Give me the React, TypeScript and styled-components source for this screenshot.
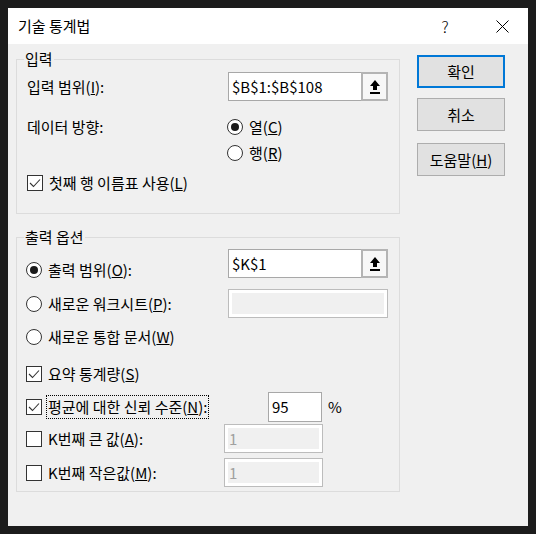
import React from "react";
import styled, { createGlobalStyle } from "styled-components";

const GlobalStyle = createGlobalStyle`
  html, body {
    margin: 0;
    background: #1c1c1c;
  }
  body {
    padding: 8px;
    font-family: "Noto Sans CJK KR", "Noto Sans", sans-serif;
    color: #000;
  }
`;

const Dialog = styled.div`
  width: 520px;
  height: 518px;
  background: #f0f0f0;
  display: flex;
  flex-direction: column;
  overflow: hidden;
`;

const TitleBar = styled.div`
  height: 36px;
  background: #fff;
  display: flex;
  align-items: center;
  padding-left: 10px;
`;

const Title = styled.div`
  flex: 1;
  font-size: 15px;
  line-height: 20px;
`;

const TitleButtons = styled.div`
  display: flex;
  align-items: center;
  gap: 37px;
  padding-right: 16px;
`;

const TitleButton = styled.span`
  width: 20px;
  height: 20px;
  display: flex;
  align-items: center;
  justify-content: center;
  font-size: 16px;
  font-weight: 300;
  line-height: 20px;
`;

const Body = styled.div`
  display: flex;
  gap: 17px;
  padding: 7px 0 0 8px;
`;

const LeftCol = styled.div`
  width: 384px;
  display: flex;
  flex-direction: column;
  gap: 15px;
`;

const ButtonCol = styled.div`
  width: 88px;
  display: flex;
  flex-direction: column;
  padding-top: 4px;
`;

const Group = styled.fieldset`
  margin: 0;
  padding: 0;
  border: 1px solid #dcdcdc;
  min-inline-size: 0;
`;

const GroupTitle = styled.legend`
  margin-left: 7px;
  padding: 0 1px;
  font-size: 15px;
  line-height: 16px;
`;

const GroupBody = styled.div<{ $pt: number; $pb: number; $pl: number }>`
  display: flex;
  flex-direction: column;
  padding: ${({ $pt, $pb, $pl }) => `${$pt}px 0 ${$pb}px ${$pl}px`};
`;

const Row = styled.div<{ $h: number; $mt?: number; $align?: string }>`
  display: flex;
  align-items: ${({ $align }) => $align || "center"};
  height: ${({ $h }) => $h}px;
  margin-top: ${({ $mt }) => $mt || 0}px;
`;

const LabelCell = styled.div<{ $w: number; $drop?: number }>`
  width: ${({ $w }) => $w}px;
  flex-shrink: 0;
  font-size: 15px;
  line-height: 20px;
  margin-bottom: ${({ $drop }) => ($drop ? -$drop : 0)}px;
`;

const TextBox = styled.div<{ $w: number; $h?: number; $disabled?: boolean }>`
  box-sizing: border-box;
  width: ${({ $w }) => $w}px;
  height: ${({ $h }) => $h || 29}px;
  border: 1px solid ${({ $disabled }) => ($disabled ? "#bcbcbc" : "#a8a8a8")};
  background: ${({ $disabled }) => ($disabled ? "#f0f0f0" : "#fff")};
  box-shadow: ${({ $disabled }) => ($disabled ? "inset 0 0 0 3px #fff" : "none")};
  color: ${({ $disabled }) => ($disabled ? "#a0a0a0" : "#000")};
  padding-left: ${({ $disabled }) => ($disabled ? 4 : 3)}px;
  font-size: 15px;
  line-height: ${({ $h }) => ($h || 29) - 2}px;
  white-space: nowrap;
`;

const RefField = styled.div`
  display: flex;
`;

const RefButton = styled.div`
  box-sizing: border-box;
  width: 27px;
  height: 29px;
  margin-left: -1px;
  border: 2px solid #b4b4b4;
  background: #f7f7f7;
  display: flex;
  align-items: center;
  justify-content: center;
`;

const Item = styled.div<{ $gap: number }>`
  display: flex;
  align-items: center;
  gap: ${({ $gap }) => $gap}px;
  font-size: 15px;
  line-height: 20px;
  white-space: nowrap;
`;

const RadioCircle = styled.span<{ $on?: boolean }>`
  box-sizing: border-box;
  width: 16px;
  height: 16px;
  border-radius: 50%;
  border: 1px solid #333;
  background: #fff;
  display: flex;
  align-items: center;
  justify-content: center;
  flex-shrink: 0;

  &::after {
    content: "";
    display: ${({ $on }) => ($on ? "block" : "none")};
    width: 8px;
    height: 8px;
    border-radius: 50%;
    background: #1a1a1a;
  }
`;

const CheckBox = styled.span`
  box-sizing: border-box;
  width: 16px;
  height: 16px;
  border: 1px solid #333;
  background: #fff;
  display: flex;
  align-items: center;
  justify-content: center;
  flex-shrink: 0;
`;

const CheckText = styled.span<{ $focus?: boolean }>`
  border: 1px ${({ $focus }) => ($focus ? "dotted #000" : "solid transparent")};
  padding: 1px 1px;
`;

const Percent = styled.span`
  margin-left: 6px;
  font-size: 15px;
  line-height: 20px;
`;

const DlgButton = styled.div<{ $primary?: boolean; $mt?: number }>`
  box-sizing: border-box;
  width: 88px;
  height: 33px;
  margin-top: ${({ $mt }) => $mt || 0}px;
  background: #e1e1e1;
  border: ${({ $primary }) => ($primary ? "2px solid #0078d7" : "1px solid #adadad")};
  display: flex;
  align-items: center;
  justify-content: center;
  font-size: 15px;
  line-height: 20px;
`;

const CloseIcon = () => (
  <svg width="13" height="13" viewBox="0 0 13 13">
    <path d="M0.5 0.5 L12.5 12.5 M12.5 0.5 L0.5 12.5" stroke="#000" strokeWidth="1" fill="none" />
  </svg>
);

const CollapseIcon = () => (
  <svg width="10" height="14" viewBox="0 0 10 14">
    <path d="M5 0 L10 6 L7 6 L7 10 L3 10 L3 6 L0 6 Z" fill="#000" />
    <rect x="0" y="12" width="10" height="2" fill="#000" />
  </svg>
);

const CheckMark = () => (
  <svg width="12" height="10" viewBox="0 0 12 10">
    <path d="M1 5 L4.5 8.5 L11 1.5" stroke="#333" strokeWidth="1.1" fill="none" />
  </svg>
);

const Radio = ({ on, children }: { on?: boolean; children: React.ReactNode }) => (
  <Item $gap={6}>
    <RadioCircle $on={on} />
    <span>{children}</span>
  </Item>
);

const Check = ({
  on,
  focus,
  children,
}: {
  on?: boolean;
  focus?: boolean;
  children: React.ReactNode;
}) => (
  <Item $gap={4}>
    <CheckBox>{on && <CheckMark />}</CheckBox>
    <CheckText $focus={focus}>{children}</CheckText>
  </Item>
);

const App = () => {
  return (
    <>
      <GlobalStyle />
      <Dialog>
        <TitleBar>
          <Title>기술 통계법</Title>
          <TitleButtons>
            <TitleButton>?</TitleButton>
            <TitleButton>
              <CloseIcon />
            </TitleButton>
          </TitleButtons>
        </TitleBar>
        <Body>
          <LeftCol>
            <Group>
              <GroupTitle>입력</GroupTitle>
              <GroupBody $pt={5} $pb={17} $pl={10}>
                <Row $h={29}>
                  <LabelCell $w={201}>
                    입력 범위(<u>I</u>):
                  </LabelCell>
                  <RefField>
                    <TextBox $w={134}>$B$1:$B$108</TextBox>
                    <RefButton>
                      <CollapseIcon />
                    </RefButton>
                  </RefField>
                </Row>
                <Row $h={26} $mt={13}>
                  <LabelCell $w={200}>데이터 방향:</LabelCell>
                  <Radio on>
                    열(<u>C</u>)
                  </Radio>
                </Row>
                <Row $h={26}>
                  <LabelCell $w={200} />
                  <Radio>
                    행(<u>R</u>)
                  </Radio>
                </Row>
                <Row $h={26} $mt={4}>
                  <Check on>
                    첫째 행 이름표 사용(<u>L</u>)
                  </Check>
                </Row>
              </GroupBody>
            </Group>

            <Group>
              <GroupTitle>출력 옵션</GroupTitle>
              <GroupBody $pt={4} $pb={4} $pl={9}>
                <Row $h={29} $align="flex-end">
                  <LabelCell $w={202} $drop={2}>
                    <Radio on>
                      출력 범위(<u>O</u>):
                    </Radio>
                  </LabelCell>
                  <RefField>
                    <TextBox $w={134}>$K$1</TextBox>
                    <RefButton>
                      <CollapseIcon />
                    </RefButton>
                  </RefField>
                </Row>
                <Row $h={29} $mt={11}>
                  <LabelCell $w={202}>
                    <Radio>
                      새로운 워크시트(<u>P</u>):
                    </Radio>
                  </LabelCell>
                  <TextBox $w={160} $disabled />
                </Row>
                <Row $h={26} $mt={6}>
                  <Radio>
                    새로운 통합 문서(<u>W</u>)
                  </Radio>
                </Row>
                <Row $h={26} $mt={11}>
                  <Check on>
                    요약 통계량(<u>S</u>)
                  </Check>
                </Row>
                <Row $h={30} $mt={5}>
                  <LabelCell $w={242}>
                    <Check on focus>
                      평균에 대한 신뢰 수준(<u>N</u>):
                    </Check>
                  </LabelCell>
                  <TextBox $w={54} $h={30}>
                    95
                  </TextBox>
                  <Percent>%</Percent>
                </Row>
                <Row $h={29} $mt={2}>
                  <LabelCell $w={198}>
                    <Check>
                      K번째 큰 값(<u>A</u>):
                    </Check>
                  </LabelCell>
                  <TextBox $w={99} $disabled>
                    1
                  </TextBox>
                </Row>
                <Row $h={29} $mt={5}>
                  <LabelCell $w={198}>
                    <Check>
                      K번째 작은값(<u>M</u>):
                    </Check>
                  </LabelCell>
                  <TextBox $w={99} $disabled>
                    1
                  </TextBox>
                </Row>
              </GroupBody>
            </Group>
          </LeftCol>

          <ButtonCol>
            <DlgButton $primary>확인</DlgButton>
            <DlgButton $mt={10}>취소</DlgButton>
            <DlgButton $mt={12}>
              도움말(<u>H</u>)
            </DlgButton>
          </ButtonCol>
        </Body>
      </Dialog>
    </>
  );
};

export default App;
